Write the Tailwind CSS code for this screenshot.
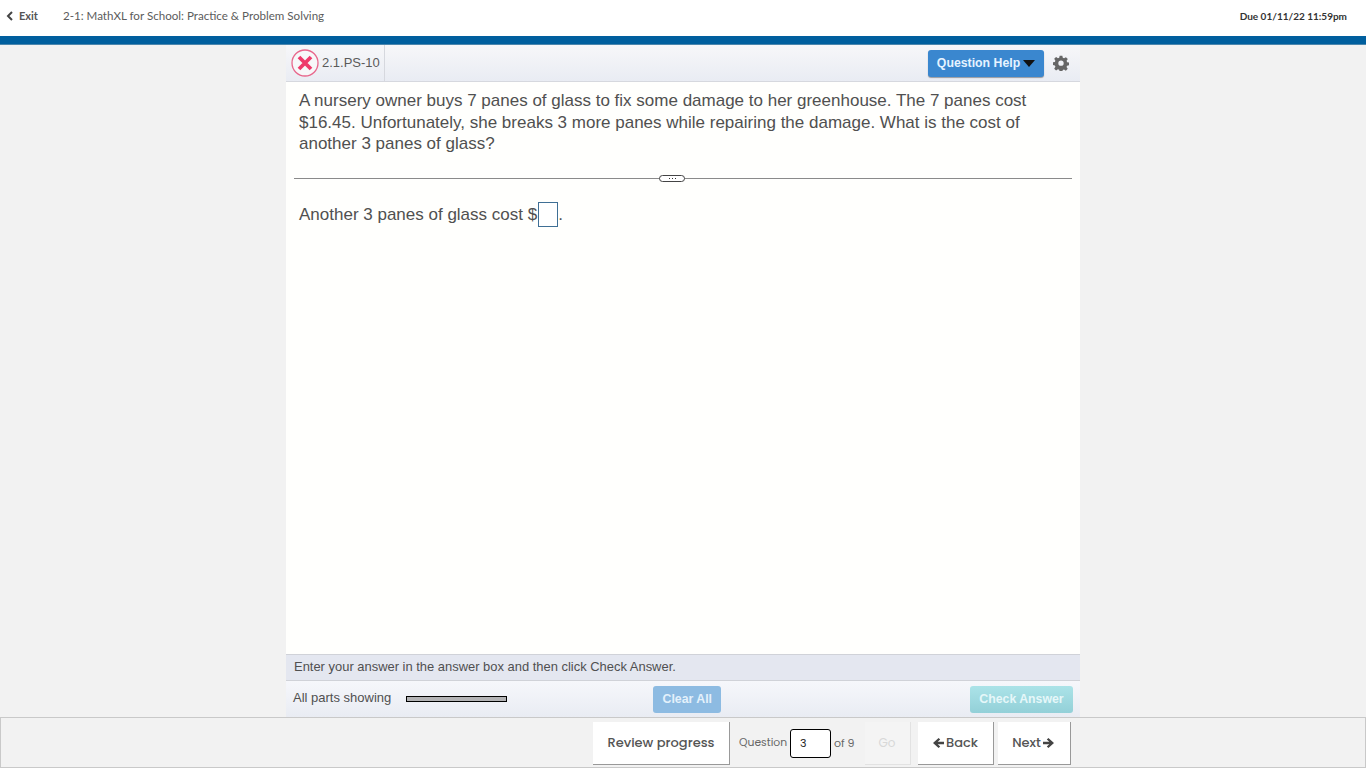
<!DOCTYPE html>
<html lang="en">
<head>
    <meta charset="UTF-8">
    <title>MathXL for School</title>
    <script src="https://cdn.jsdelivr.net/npm/@tailwindcss/browser@4"></script>
</head>
<body class="bg-[#f2f2f2]">
<div class="h-[768px] flex flex-col overflow-hidden font-['Liberation_Sans',sans-serif]">

    <!-- Top header -->
    <header class="h-[36px] bg-white flex items-start justify-between font-['Lato',sans-serif]">
        <div class="flex items-center h-[32px]">
            <svg class="w-[8px] h-[10px] ml-[6px] text-[#444]" viewBox="0 0 8 10" fill="none" stroke="currentColor" stroke-width="2"><path d="M6 1 2 5l4 4"/></svg>
            <span class="ml-[5px] text-[11px] font-bold text-[#555]">Exit</span>
            <span class="ml-[25px] text-[11.6px] text-[#5c5c5c]">2-1: MathXL for School: Practice &amp; Problem Solving</span>
        </div>
        <span class="h-[32px] leading-[33px] mr-[19px] text-[10px] font-bold text-[#333]">Due 01/11/22 11:59pm</span>
    </header>
    <div class="h-[9px] bg-[#005f9e] border-b border-[#4b86ad]"></div>

    <!-- Question panel -->
    <main class="flex-1 min-h-0 ml-[286px] w-[794px] bg-white flex flex-col">
        <div class="h-[37px] shrink-0 flex items-center bg-gradient-to-b from-[#f7f7f9] to-[#e9ecf3] border-b border-[#d6d8de]">
            <svg class="w-[28px] h-[28px] ml-[5px]" viewBox="0 0 28 28" fill="none">
                <circle cx="14" cy="14" r="13" stroke="#e8678c" stroke-width="1.3" fill="#f7f7f9"/>
                <path d="M8 8l12 12M20 8 8 20" stroke="#ee3a6b" stroke-width="3.800"/>
            </svg>
            <div class="h-full ml-[3px] pr-[4px] flex items-center border-r border-[#d6d8de] text-[13px] text-[#5a5a5a]">2.1.PS-10</div>
            <button class="ml-auto h-[27px] w-[116px] flex items-center justify-center gap-[3px] rounded-[3px] bg-[#3a87cf] shadow-[0_1px_1px_rgba(0,0,0,0.35)] text-[12.3px] font-bold text-[#e6f3ff]">
                Question Help
                <svg class="w-[12px] h-[7px]" viewBox="0 0 12 7"><path d="M0 0h12L6 7z" fill="#111"/></svg>
            </button>
            <svg class="w-[16px] h-[16px] ml-[9px] mr-[11px]" viewBox="0 0 24 24" fill="#666"><path fill-rule="evenodd" d="M10 1h4l.7 3.2 1.9.8 2.8-1.8 2.8 2.8L20.4 8.800l.8 1.900 3 .6v4l-3.100.7-.8 1.900 1.800 2.800-2.800 2.800-2.800-1.800-1.900.8-.6 2.700h-4l-.7-2.900-1.900-.8-2.800 1.800-2.800-2.800 1.800-2.800-.8-1.900-3-.7v-4l3-.6.8-1.900-1.800-2.800 2.800-2.800 2.800 1.800 1.900-.8zM12 8.200a4 4 0 1 0 0 8 4 4 0 0 0 0-8z"/></svg>
        </div>

        <div class="flex-1 min-h-0 bg-[#fffffd]">
            <p class="pt-[8px] pl-[13px] pr-[40px] text-[17px] leading-[21.5px] text-[#505050]">A nursery owner buys 7 panes of glass to fix some damage to her greenhouse. The 7 panes cost $16.45. Unfortunately, she breaks 3 more panes while repairing the damage. What is the cost of another 3 panes of glass?</p>

            <div class="relative mt-[23px] ml-[8px] mr-[8px] border-t border-[#8a8a8a]">
                <div class="absolute left-[365px] -top-[4px] w-[26px] h-[7px] rounded-full border border-[#444] bg-white flex items-center justify-center gap-[2px]">
                    <span class="w-[1px] h-[1px] bg-[#333]"></span>
                    <span class="w-[1px] h-[1px] bg-[#333]"></span>
                    <span class="w-[1px] h-[1px] bg-[#333]"></span>
                </div>
            </div>

            <div class="mt-[23px] ml-[13px] flex items-center text-[17px] leading-[26px] text-[#505050]">
                <span>Another 3 panes of glass cost $</span>
                <input class="ml-[1px] w-[20px] h-[25px] bg-white border border-[#3f6f95] outline-none" type="text">
                <span>.</span>
            </div>
        </div>

        <div class="h-[27px] shrink-0 flex items-center bg-[#e4e7f0] border-y border-[#d0d2d8] pl-[8px] text-[12.95px] text-[#505050]"><span class="-mt-[2px]">Enter your answer in the answer box and then click Check Answer.</span></div>
        <div class="h-[36px] shrink-0 flex items-center bg-gradient-to-b from-[#f6f7fb] to-[#e9ecf3]">
            <span class="ml-[7px] -mt-[3px] text-[13px] text-[#505050]">All parts showing</span>
            <div class="ml-[15px] w-[101px] h-[6px] bg-[#b3b3b5] border border-black"></div>
            <button class="ml-[146px] w-[68px] h-[27px] rounded-[3px] bg-[#8dbbe2] text-[12.3px] font-bold text-[#e4f1fb]">Clear All</button>
            <button class="ml-auto mr-[7px] w-[103px] h-[27px] rounded-[3px] bg-gradient-to-b from-[#abe3e8] to-[#93d0d8] text-[12.3px] font-bold text-[#e6f7f9]">Check Answer</button>
        </div>
    </main>

    <!-- Footer nav -->
    <footer class="h-[51px] shrink-0 pt-[2px] bg-[#f2f2f2] border border-[#c9c9c9] flex items-center font-['Poppins','Lato',sans-serif]">
        <button class="ml-[592px] w-[137px] h-[43px] bg-white border-r border-b border-[#999] text-[13px] font-medium text-[#555]">Review progress</button>
        <span class="ml-[9px] w-[49px] text-[10.8px] text-[#666]">Question</span>
        <input class="ml-[2px] w-[41px] h-[29px] pl-[9px] bg-white border border-black rounded-[3px] text-[11px] text-[#222] outline-none" type="text" value="3">
        <span class="ml-[3px] text-[11px] text-[#666]">of 9</span>
        <button class="ml-[10px] w-[46px] h-[43px] bg-[#f4f4f4] border-r border-b border-[#e2e2e2] text-[12px] text-[#d8d8d8]">Go</button>
        <button class="ml-[7px] w-[76px] h-[43px] flex items-center justify-center gap-[2px] bg-white border-r border-b border-[#999] text-[13px] font-medium text-[#555]">
            <svg class="w-[12px] h-[12px]" viewBox="0 0 12 12" fill="#444"><path d="M6.600 1 8.200 2.600 5.700 4.700H12v2.600H5.700L8.200 9.400 6.600 11 1 6z"/></svg>
            Back
        </button>
        <button class="ml-[4px] w-[73px] h-[43px] flex items-center justify-center gap-[2px] bg-white border-r border-b border-[#999] text-[13px] font-medium text-[#555]">
            Next
            <svg class="w-[12px] h-[12px]" viewBox="0 0 12 12" fill="#444"><path d="M5.400 1 3.800 2.600 6.300 4.700H0v2.600h6.300L3.800 9.400 5.400 11 11 6z"/></svg>
        </button>
    </footer>
</div>
</body>
</html>
